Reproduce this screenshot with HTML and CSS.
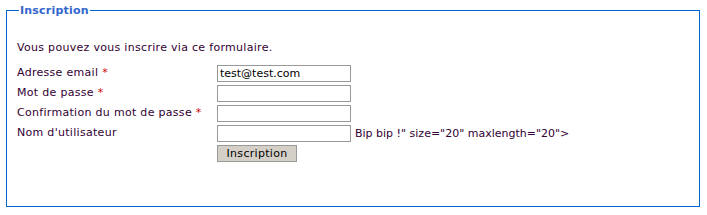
FILE: index.html
```html
<!DOCTYPE html>
<html>
<head>
<meta charset="utf-8">
<link rel="stylesheet" href="styles.css">
</head>
<body>
<fieldset class="box">
  <legend class="box-title">Inscription</legend>
  <p class="intro">Vous pouvez vous inscrire via ce formulaire.</p>
  <div class="form">
    <div class="label">Adresse email <span class="req">*</span></div>
    <div class="field"><input class="text" type="text" value="test@test.com"></div>
    <div class="label">Mot de passe <span class="req">*</span></div>
    <div class="field"><input class="text" type="password"></div>
    <div class="label">Confirmation du mot de passe <span class="req">*</span></div>
    <div class="field"><input class="text" type="password"></div>
    <div class="label">Nom d'utilisateur</div>
    <div class="field"><input class="text" type="text"><span class="extra">Bip bip !" size="20" maxlength="20"&gt;</span></div>
    <div class="label"></div>
    <div class="field"><button class="btn" type="button">Inscription</button></div>
  </div>
</fieldset>
</body>
</html>
```

FILE: styles.css
```css
html, body {
  margin: 0;
  padding: 0;
  background: #ffffff;
}
body {
  font-family: "DejaVu Sans", Verdana, sans-serif;
  font-size: 11px;
  color: #330033;
}
.box {
  margin: 4px 7px 0 6px;
  border: 1px solid #0066cc;
  padding: 10px 10px 0 10px;
  height: 203px;
  box-sizing: border-box;
}
.box-title {
  color: #3366cc;
  font-weight: bold;
  padding: 0 1px;
  margin-left: 2px;
  letter-spacing: 0.2px;
}
.intro {
  margin: 14px 0 10px 0;
  line-height: 14px;
  letter-spacing: 0.3px;
}
.form {
  display: grid;
  grid-template-columns: 200px 1fr;
  row-gap: 3px;
}
.label {
  line-height: 15px;
  height: 17px;
  letter-spacing: 0.3px;
}
.req {
  color: #cc0000;
}
.field {
  display: flex;
  align-items: center;
  height: 17px;
}
.text {
  box-sizing: border-box;
  width: 134px;
  height: 17px;
  border: 1px solid #999999;
  padding: 0 2px;
  margin: 0;
  font-family: "DejaVu Sans", Verdana, sans-serif;
  font-size: 11px;
  color: #000000;
  background: #ffffff;
}
.extra {
  margin-left: 4px;
}
.btn {
  box-sizing: border-box;
  width: 80px;
  height: 17px;
  border: 1px solid #999999;
  background: #d4d0c8;
  padding: 0;
  margin: 0;
  font-family: "DejaVu Sans", Verdana, sans-serif;
  font-size: 11px;
  color: #000000;
  letter-spacing: 0.3px;
}
```
